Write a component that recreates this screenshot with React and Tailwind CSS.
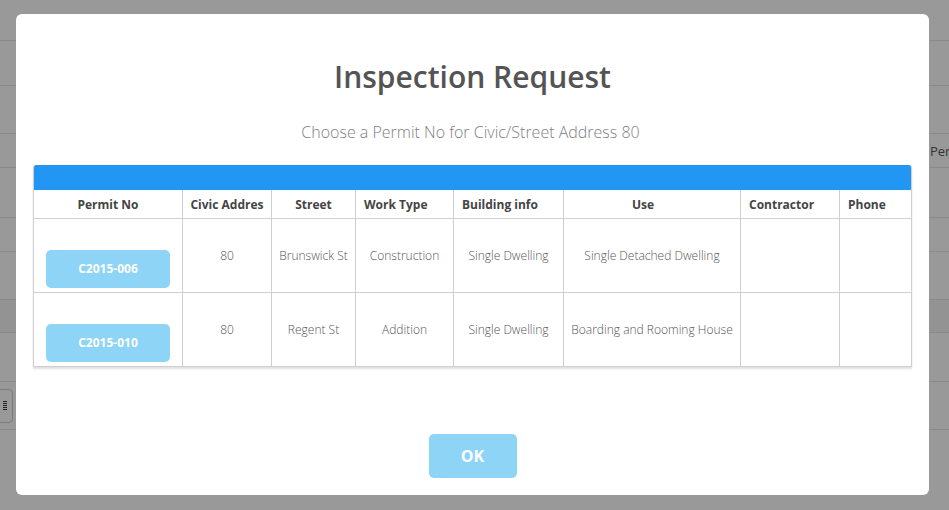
import React from "react";

const cols = [
  { label: "Permit No", head: "justify-center" },
  { label: "Civic Addres", head: "justify-center" },
  { label: "Street", head: "justify-center" },
  { label: "Work Type", head: "justify-start pl-2" },
  { label: "Building info", head: "justify-start pl-2" },
  { label: "Use", head: "justify-start pl-[68px]" },
  { label: "Contractor", head: "justify-start pl-2" },
  { label: "Phone", head: "justify-start pl-2" },
];

const permits = [
  {
    no: "C2015-006",
    civic: "80",
    street: "Brunswick St",
    workType: "Construction",
    building: "Single Dwelling",
    use: "Single Detached Dwelling",
    contractor: "",
    phone: "",
  },
  {
    no: "C2015-010",
    civic: "80",
    street: "Regent St",
    workType: "Addition",
    building: "Single Dwelling",
    use: "Boarding and Rooming House",
    contractor: "",
    phone: "",
  },
];

const gridCols = "grid grid-cols-[149px_89px_84px_98px_110px_177px_99px_71px]";

const BgRow = ({ h, band, children }) => (
  <div
    className={`${h} w-full border-b border-[#8a8a8a] ${band ? "bg-[#939393]" : ""} flex items-center`}
  >
    {children}
  </div>
);

const App = () => {
  return (
    <div
      className="relative h-[510px] w-[949px] overflow-hidden bg-[#999999]"
      style={{ fontFamily: '"Open Sans", "Liberation Sans", sans-serif' }}
    >
      {/* page behind the overlay */}
      <div className="flex flex-col">
        <BgRow h="h-[41px]" />
        <BgRow h="h-[45px]" />
        <BgRow h="h-[48px]" />
        <BgRow h="h-[34px]">
          <div className="ml-[930px] pt-[2px] text-[13px] text-[#333]">Per</div>
        </BgRow>
        <BgRow h="h-[50px]" />
        <BgRow h="h-[34px]" />
        <BgRow h="h-[48px]" />
        <BgRow h="h-[33px]" band />
        <BgRow h="h-[49px]" />
        <BgRow h="h-[48px]">
          <div className="-ml-[6px] flex h-[34px] w-[19px] items-center justify-end rounded-[4px] border border-[#7a7a7a] pr-[5px]">
            <div className="flex flex-col gap-[1px]">
              <div className="h-[1px] w-[4px] bg-[#222]" />
              <div className="h-[1px] w-[4px] bg-[#222]" />
              <div className="h-[1px] w-[4px] bg-[#222]" />
              <div className="h-[1px] w-[4px] bg-[#222]" />
              <div className="h-[1px] w-[4px] bg-[#222]" />
            </div>
          </div>
        </BgRow>
      </div>

      {/* modal */}
      <div className="absolute inset-0">
        <div className="ml-4 mt-[14px] flex h-[481px] w-[913px] flex-col items-center rounded-[6px] bg-white px-[17px] pt-[43px]">
          <h2 className="h-[40px] text-[30px] font-semibold leading-[40px] text-[#545454]">
            Inspection Request
          </h2>
          <p className="mt-[23px] h-[24px] pr-[4px] text-[16px] font-light leading-[24px] text-[#808080]">
            Choose a Permit No for Civic/Street Address 80
          </p>

          <div className="mt-[21px] w-[879px] overflow-hidden rounded-t-[3px] border border-t-0 border-[#cfcfcf] shadow-[0_2px_2px_rgba(0,0,0,0.12)]">
            <div className="h-[25px] bg-[#2196f3]" />
            <div className={`${gridCols} border-b border-[#cfcfcf]`}>
              {cols.map((c, i) => (
                <div
                  key={c.label}
                  className={`flex h-[28px] items-center pt-[2px] text-[12px] font-bold text-[#444] ${c.head} ${
                    i < cols.length - 1 ? "border-r border-[#cfcfcf]" : ""
                  }`}
                >
                  {c.label}
                </div>
              ))}
            </div>
            {permits.map((p, r) => {
              const cells = [p.civic, p.street, p.workType, p.building, p.use, p.contractor, p.phone];
              return (
                <div
                  key={p.no}
                  className={`${gridCols} ${r < permits.length - 1 ? "border-b border-[#cfcfcf]" : ""}`}
                >
                  <div className="flex h-[73px] items-end justify-center border-r border-[#cfcfcf] pb-[4px]">
                    <button className="h-[38px] w-[124px] rounded-[5px] bg-[#8dd4f6] text-[12px] font-bold text-white">
                      {p.no}
                    </button>
                  </div>
                  {cells.map((v, i) => (
                    <div
                      key={i}
                      className={`flex h-[73px] items-center justify-center pt-[1px] text-center text-[12px] font-light text-[#555] ${
                        i < cells.length - 1 ? "border-r border-[#cfcfcf]" : ""
                      }`}
                    >
                      {v}
                    </div>
                  ))}
                </div>
              );
            })}
          </div>

          <button className="mt-[67px] h-[44px] w-[88px] rounded-[5px] bg-[#8dd4f6] text-[16px] font-bold text-white">
            OK
          </button>
        </div>
      </div>
    </div>
  );
};

export default App;
